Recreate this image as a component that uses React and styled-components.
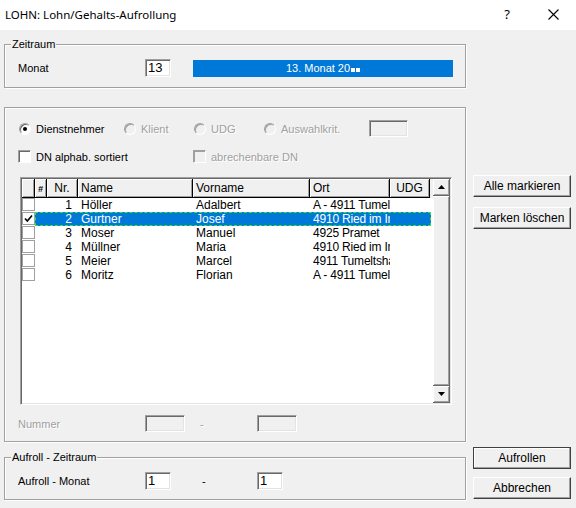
import styled, { createGlobalStyle } from "styled-components";

const GlobalStyle = createGlobalStyle`
  html, body { margin: 0; padding: 0; background: #f0f0f0; }
  * { box-sizing: border-box; }
`;

const people = [
  { nr: 1, name: "Höller", vorname: "Adalbert", ort: "A - 4911 Tumeltsham" },
  { nr: 2, name: "Gurtner", vorname: "Josef", ort: "4910 Ried im Innkreis", checked: true, selected: true },
  { nr: 3, name: "Moser", vorname: "Manuel", ort: "4925 Pramet" },
  { nr: 4, name: "Müllner", vorname: "Maria", ort: "4910 Ried im Innkreis" },
  { nr: 5, name: "Meier", vorname: "Marcel", ort: "4911 Tumeltsham" },
  { nr: 6, name: "Moritz", vorname: "Florian", ort: "A - 4911 Tumeltsham" },
];

const columns = [
  { key: "hash", label: "#", width: 12, align: "center" },
  { key: "nr", label: "Nr.", width: 31, align: "center" },
  { key: "name", label: "Name", width: 115 },
  { key: "vorname", label: "Vorname", width: 117 },
  { key: "ort", label: "Ort", width: 80 },
  { key: "udg", label: "UDG", width: 40, align: "center" },
];

const App = () => {
  return (
    <Window>
      <GlobalStyle />
      <TitleBar>
        <Title>LOHN: Lohn/Gehalts-Aufrollung</Title>
        <TitleButton>?</TitleButton>
        <TitleButton>
          <svg width="11" height="11" viewBox="0 0 11 11">
            <path d="M0.5 0.5 L10.5 10.5 M10.5 0.5 L0.5 10.5" stroke="#000" strokeWidth="1.1" />
          </svg>
        </TitleButton>
      </TitleBar>

      <Body>
        <LeftCol>
          <Group $top={14} $height={44}>
            <Caption>Zeitraum</Caption>
            <FieldRow $top={14}>
              <FieldLabel>Monat</FieldLabel>
              <Input $width={26}>13</Input>
              <MonthBar>
                13. Monat 20<Blip />
                <Blip />
              </MonthBar>
            </FieldRow>
          </Group>

          <Group $top={19} $height={335}>
            <RadioRow>
              <Choice $width={105}>
                <Radio $checked />
                <span>Dienstnehmer</span>
              </Choice>
              <Choice $width={70} $disabled>
                <Radio $disabled />
                <span>Klient</span>
              </Choice>
              <Choice $width={70} $disabled>
                <Radio $disabled />
                <span>UDG</span>
              </Choice>
              <Choice $width={105} $disabled>
                <Radio $disabled />
                <span>Auswahlkrit.</span>
              </Choice>
              <Input $width={39} $height={17} $disabled />
            </RadioRow>

            <CheckRow>
              <Choice $width={175}>
                <CheckBox />
                <span>DN alphab. sortiert</span>
              </Choice>
              <Choice $width={120} $disabled>
                <CheckBox $disabled />
                <span>abrechenbare DN</span>
              </Choice>
            </CheckRow>

            <ListFrame>
              <ListTable>
                <HeaderRow>
                  <HeadCell $width={13} />
                  {columns.map((c) => (
                    <HeadCell key={c.key} $width={c.width} $align={c.align}>
                      {c.key === "hash" ? <HashMark>#</HashMark> : c.label}
                    </HeadCell>
                  ))}
                </HeaderRow>
                {people.map((p) => (
                  <Row key={p.nr}>
                    <CheckCell>
                      <RowCheck>
                        {p.checked && (
                          <svg width="9" height="9" viewBox="0 0 9 9">
                            <path d="M1 4.5 L3.3 7 L8 1.5" stroke="#000" strokeWidth="1.6" fill="none" />
                          </svg>
                        )}
                      </RowCheck>
                    </CheckCell>
                    <RowBody $selected={p.selected}>
                      <Cell $width={12} />
                      <Cell $width={31} $align="right">{p.nr}</Cell>
                      <Cell $width={115}>{p.name}</Cell>
                      <Cell $width={117}>{p.vorname}</Cell>
                      <Cell $width={80} $tight>{p.ort}</Cell>
                      <Cell $width={40} />
                    </RowBody>
                  </Row>
                ))}
              </ListTable>
              <ScrollBar>
                <ScrollButton>
                  <svg width="7" height="4" viewBox="0 0 7 4">
                    <path d="M0 4 L3.5 0 L7 4 Z" fill="#000" />
                  </svg>
                </ScrollButton>
                <Thumb />
                <ScrollButton>
                  <svg width="7" height="4" viewBox="0 0 7 4">
                    <path d="M0 0 L3.5 4 L7 0 Z" fill="#000" />
                  </svg>
                </ScrollButton>
              </ScrollBar>
            </ListFrame>

            <FieldRow $top={10} $disabled>
              <FieldLabel>Nummer</FieldLabel>
              <Input $width={40} $height={17} $disabled />
              <Dash $width={72} $indent={15}>-</Dash>
              <Input $width={40} $height={17} $disabled />
            </FieldRow>
          </Group>

          <Group $top={15} $height={43}>
            <Caption>Aufroll - Zeitraum</Caption>
            <FieldRow $top={14}>
              <FieldLabel>Aufroll - Monat</FieldLabel>
              <Input $width={26}>1</Input>
              <Dash $width={86} $indent={31}>-</Dash>
              <Input $width={26}>1</Input>
            </FieldRow>
          </Group>
        </LeftCol>

        <RightCol>
          <Button $top={145}>Alle markieren</Button>
          <Button $top={10}>Marken löschen</Button>
          <Button $top={218} $default>Aufrollen</Button>
          <Button $top={8}>Abbrechen</Button>
        </RightCol>
      </Body>
    </Window>
  );
};

const Window = styled.div`
  width: 576px;
  height: 508px;
  overflow: hidden;
  background: #f0f0f0;
  font-family: "Liberation Sans", Arial, sans-serif;
  font-size: 11px;
  color: #000;
`;

const TitleBar = styled.div`
  height: 30px;
  background: #fff;
  display: flex;
  align-items: center;
  padding-left: 5px;
`;

const Title = styled.div`
  flex: 1;
  font-family: "Noto Sans", "Liberation Sans", sans-serif;
  font-size: 11.5px;
  margin-top: -2px;
`;

const TitleButton = styled.div`
  width: 46px;
  height: 30px;
  display: flex;
  align-items: center;
  justify-content: center;
  font-family: "Noto Sans", sans-serif;
  font-size: 13px;
  padding-bottom: 2px;
`;

const Body = styled.div`
  display: flex;
  padding-left: 4px;
`;

const LeftCol = styled.div`
  width: 462px;
  display: flex;
  flex-direction: column;
`;

const RightCol = styled.div`
  width: 98px;
  margin-left: 7px;
  display: flex;
  flex-direction: column;
`;

const Group = styled.div`
  position: relative;
  margin-top: ${(p) => p.$top}px;
  height: ${(p) => p.$height}px;
  border: 1px solid #a0a0a0;
  box-shadow: inset 1px 1px 0 #fff, 1px 1px 0 #fff;
  padding-left: 13px;
`;

const Caption = styled.span`
  position: absolute;
  top: -8px;
  left: 6px;
  padding: 0 1px;
  background: #f0f0f0;
  line-height: 14px;
`;

const FieldRow = styled.div`
  display: flex;
  align-items: center;
  margin-top: ${(p) => p.$top}px;
  color: ${(p) => (p.$disabled ? "#a0a0a0" : "#000")};
  text-shadow: ${(p) => (p.$disabled ? "1px 1px 0 #fff" : "none")};
`;

const FieldLabel = styled.span`
  width: 127px;
`;

const Input = styled.div`
  width: ${(p) => p.$width}px;
  height: ${(p) => p.$height || 18}px;
  background: ${(p) => (p.$disabled ? "#f0f0f0" : "#fff")};
  border: 1px solid;
  border-color: #a0a0a0 #fff #fff #a0a0a0;
  box-shadow: inset 1px 1px 0 #696969, inset -1px -1px 0 #e3e3e3;
  padding: 0 2px;
  font-size: 13px;
  line-height: 16px;
  color: #000;
  text-shadow: none;
`;

const MonthBar = styled.div`
  margin-left: 22px;
  width: 260px;
  height: 17px;
  background: #0078d7;
  color: #fff;
  font-size: 11px;
  line-height: 17px;
  text-align: center;
`;

const Blip = styled.span`
  display: inline-block;
  width: 4px;
  height: 4px;
  margin-left: 1px;
  background: #fff;
  vertical-align: 0;
`;

const RadioRow = styled.div`
  display: flex;
  align-items: center;
  margin-top: 12px;
  margin-left: 1px;
  height: 17px;
`;

const CheckRow = styled.div`
  display: flex;
  align-items: center;
  margin-top: 13px;
  height: 13px;
`;

const Choice = styled.label`
  width: ${(p) => p.$width}px;
  display: flex;
  align-items: center;
  gap: 5px;
  color: ${(p) => (p.$disabled ? "#a0a0a0" : "#000")};
  text-shadow: ${(p) => (p.$disabled ? "1px 1px 0 #fff" : "none")};
`;

const Radio = styled.span`
  position: relative;
  width: 12px;
  height: 12px;
  border-radius: 50%;
  border: 1px solid;
  border-color: #a0a0a0 #fff #fff #a0a0a0;
  box-shadow: inset 1px 1px 0 ${(p) => (p.$disabled ? "#a0a0a0" : "#696969")};
  background: ${(p) => (p.$disabled ? "#f0f0f0" : "#fff")};
  flex: none;

  &::after {
    content: "";
    display: ${(p) => (p.$checked ? "block" : "none")};
    position: absolute;
    top: 3px;
    left: 3px;
    width: 4px;
    height: 4px;
    border-radius: 50%;
    background: #000;
  }
`;

const CheckBox = styled.span`
  width: 13px;
  height: 13px;
  flex: none;
  border: 1px solid;
  border-color: #a0a0a0 #fff #fff #a0a0a0;
  box-shadow: inset 1px 1px 0 ${(p) => (p.$disabled ? "#a0a0a0" : "#696969")};
  background: ${(p) => (p.$disabled ? "#f0f0f0" : "#fff")};
`;

const ListFrame = styled.div`
  display: flex;
  margin-top: 14px;
  margin-left: 2px;
  width: 432px;
  height: 228px;
  border: 1px solid;
  border-color: #a0a0a0 #fff #fff #a0a0a0;
  box-shadow: inset 1px 1px 0 #696969, inset -1px -1px 0 #e3e3e3;
  padding: 1px;
`;

const ListTable = styled.div`
  width: 411px;
  background: #fff;
  display: flex;
  flex-direction: column;
`;

const HeaderRow = styled.div`
  display: flex;
  height: 19px;
  flex: none;
  background: #f0f0f0;
`;

const HeadCell = styled.div`
  width: ${(p) => p.$width}px;
  flex: none;
  height: 19px;
  border-right: 1px solid #000;
  border-bottom: 1px solid #000;
  box-shadow: inset 1px 1px 0 #fff, inset -1px -1px 0 #a0a0a0;
  line-height: 18px;
  font-size: 12px;
  padding: 0 3px;
  text-align: ${(p) => p.$align || "left"};
  white-space: nowrap;
  overflow: hidden;
`;

const HashMark = styled.span`
  font-size: 9px;
  font-weight: bold;
  font-style: italic;
`;

const Row = styled.div`
  display: flex;
  height: 14px;
  flex: none;
`;

const CheckCell = styled.div`
  width: 13px;
  flex: none;
`;

const RowCheck = styled.div`
  width: 13px;
  height: 13px;
  border: 1px solid #a0a0a0;
  background: #fff;
  display: flex;
  align-items: center;
  justify-content: center;
`;

const RowBody = styled.div`
  display: flex;
  width: 396px;
  height: 14px;
  background: ${(p) => (p.$selected ? "#0078d7" : "transparent")};
  color: ${(p) => (p.$selected ? "#fff" : "#000")};
  outline: ${(p) => (p.$selected ? "1px dashed #39e639" : "none")};
  outline-offset: -1px;
`;

const Cell = styled.div`
  width: ${(p) => p.$width}px;
  flex: none;
  font-size: 12px;
  line-height: 14px;
  padding-left: 3px;
  padding-right: ${(p) => (p.$align === "right" ? 6 : p.$tight ? 0 : 3)}px;
  text-align: ${(p) => p.$align || "left"};
  white-space: nowrap;
  overflow: hidden;
  text-overflow: clip;
  letter-spacing: ${(p) => (p.$tight ? "-0.2px" : "0")};
`;

const ScrollBar = styled.div`
  width: 17px;
  display: flex;
  flex-direction: column;
  background: #f0f0f0;
`;

const ScrollButton = styled.div`
  height: 17px;
  flex: none;
  display: flex;
  align-items: center;
  justify-content: center;
  background: #f0f0f0;
  border-right: 1px solid #696969;
  border-bottom: 1px solid #696969;
  box-shadow: inset 1px 1px 0 #fff, inset -1px -1px 0 #a0a0a0;
`;

const Thumb = styled(ScrollButton)`
  flex: 1;
  height: auto;
`;

const Dash = styled.span`
  width: ${(p) => p.$width}px;
  padding-left: ${(p) => p.$indent}px;
`;

const Button = styled.div`
  margin-top: ${(p) => p.$top}px;
  height: 22px;
  display: flex;
  align-items: center;
  justify-content: center;
  background: #f0f0f0;
  border: 1px solid;
  border-color: ${(p) => (p.$default ? "#404040" : "#fff #404040 #404040 #fff")};
  box-shadow: inset -1px -1px 0 #a0a0a0${(p) => (p.$default ? ", inset 1px 1px 0 #fff" : "")};
  font-size: 12px;
`;

export default App;
